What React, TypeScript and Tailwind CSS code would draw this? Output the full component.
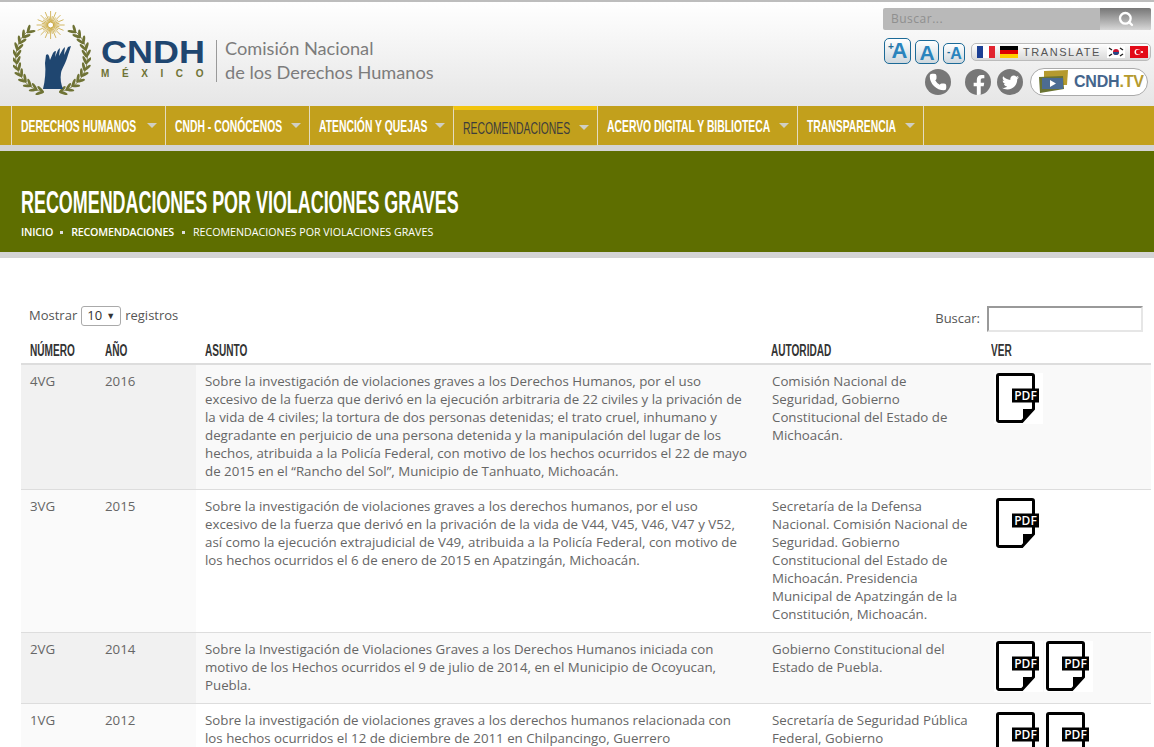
import { Search, Phone } from "lucide-react";
import { FaFacebookF, FaTwitter } from "react-icons/fa";

const body = { fontFamily: '"Open Sans", sans-serif' };
const arial = { fontFamily: '"Liberation Sans", sans-serif' };

const menu = [
  { label: "DERECHOS HUMANOS", w: "w-[154px]" },
  { label: "CNDH - CONÓCENOS", w: "w-[144px]" },
  { label: "ATENCIÓN Y QUEJAS", w: "w-[144px]" },
  { label: "RECOMENDACIONES", w: "w-[144px]", active: true },
  { label: "ACERVO DIGITAL Y BIBLIOTECA", w: "w-[200px]" },
  { label: "TRANSPARENCIA", w: "w-[127px]" },
];

const rows = [
  {
    num: "4VG",
    year: "2016",
    h: "h-[125px]",
    asunto:
      "Sobre la investigación de violaciones graves a los Derechos Humanos, por el uso\nexcesivo de la fuerza que derivó en la ejecución arbitraria de 22 civiles y la privación de\nla vida de 4 civiles; la tortura de dos personas detenidas; el trato cruel, inhumano y\ndegradante en perjuicio de una persona detenida y la manipulación del lugar de los\nhechos, atribuida a la Policía Federal, con motivo de los hechos ocurridos el 22 de mayo\nde 2015 en el “Rancho del Sol”, Municipio de Tanhuato, Michoacán.",
    autoridad: "Comisión Nacional de\nSeguridad, Gobierno\nConstitucional del Estado de\nMichoacán.",
    pdfs: 1,
    odd: true,
  },
  {
    num: "3VG",
    year: "2015",
    h: "h-[143px]",
    asunto:
      "Sobre la investigación de violaciones graves a los derechos humanos, por el uso\nexcesivo de la fuerza que derivó en la privación de la vida de V44, V45, V46, V47 y V52,\nasí como la ejecución extrajudicial de V49, atribuida a la Policía Federal, con motivo de\nlos hechos ocurridos el 6 de enero de 2015 en Apatzingán, Michoacán.",
    autoridad:
      "Secretaría de la Defensa\nNacional. Comisión Nacional de\nSeguridad. Gobierno\nConstitucional del Estado de\nMichoacán. Presidencia\nMunicipal de Apatzingán de la\nConstitución, Michoacán.",
    pdfs: 1,
    odd: false,
  },
  {
    num: "2VG",
    year: "2014",
    h: "h-[71px]",
    asunto:
      "Sobre la Investigación de Violaciones Graves a los Derechos Humanos iniciada con\nmotivo de los Hechos ocurridos el 9 de julio de 2014, en el Municipio de Ocoyucan,\nPuebla.",
    autoridad: "Gobierno Constitucional del\nEstado de Puebla.",
    pdfs: 2,
    odd: true,
  },
  {
    num: "1VG",
    year: "2012",
    h: "h-[143px]",
    asunto:
      "Sobre la investigación de violaciones graves a los derechos humanos relacionada con\nlos hechos ocurridos el 12 de diciembre de 2011 en Chilpancingo, Guerrero",
    autoridad: "Secretaría de Seguridad Pública\nFederal, Gobierno",
    pdfs: 2,
    odd: false,
  },
];

function PdfIcon() {
  return (
    <svg width="49" height="51" viewBox="0 0 49 51" className="block bg-white">
      <path d="M5 1.500h33a1.500 1.500 0 0 1 1.500 1.500v33L28 48.500H5A1.500 1.500 0 0 1 3.500 47V3A1.500 1.500 0 0 1 5 1.500Z" fill="#fff" stroke="#000" strokeWidth="3" />
      <path d="M29 47V36h10Z" fill="#000" />
      <rect x="18" y="15.500" width="27" height="14" fill="#000" />
      <text x="31.500" y="27" textAnchor="middle" fill="#fff" fontSize="12" fontWeight="600" fontFamily="Open Sans, sans-serif">PDF</text>
    </svg>
  );
}

function Logo() {
  const cx = 38.5;
  const cy = 47;
  const r = 35;
  const steps = [0, 1, 2, 3, 4, 5, 6, 7, 8, 9, 10, 11];
  const wreath = (
    <g fill="#6f7335">
      <path d="M15 20A35 35 0 0 0 30 81" fill="none" stroke="#6f7335" strokeWidth="0.8" />
      {steps.map((i) => {
        const deg = 256 - i * 11.2;
        const a = (deg * Math.PI) / 180;
        const x = cx + Math.cos(a) * r;
        const y = cy - Math.sin(a) * r;
        const tangent = 90 - deg;
        return (
          <g key={i}>
            <ellipse cx={x} cy={y} rx="4.4" ry="1.4" transform={`rotate(${tangent + 32} ${x} ${y}) translate(3.500 0)`} />
            <ellipse cx={x} cy={y} rx="4.4" ry="1.4" transform={`rotate(${tangent - 32} ${x} ${y}) translate(3.500 0)`} />
          </g>
        );
      })}
    </g>
  );
  return (
    <svg width="78" height="84" viewBox="0 0 78 84" className="block">
      <g stroke="#c9a73c" strokeWidth="0.8">
        {Array.from({ length: 32 }).map((_, i) => {
          const a = (i * Math.PI) / 16;
          const len = i % 2 ? 9 : 14;
          return <line key={i} x1={37.6} y1={14} x2={37.6 + Math.cos(a) * len} y2={14 + Math.sin(a) * len} />;
        })}
      </g>
      <circle cx="37.6" cy="14" r="3" fill="#fff" stroke="#c9a73c" />
      {wreath}
      <g transform="translate(77 0) scale(-1 1)">{wreath}</g>
      <path d="M30 78C32 70 33 60 32 52L33 44Q35 42 36 45L37 49L40 42Q41 40 43 40L42 46L45 39L47 37L46 45L50 38L52 36L51 44L55 36L58 35L55 44C53 52 49 57 48 62C47 68 48 73 50 78Z" fill="#1f4670" />
    </svg>
  );
}

function Korea() {
  return (
    <svg width="18" height="12" viewBox="0 0 18 12" className="block bg-white">
      <circle cx="9" cy="6" r="3" fill="#c8102e" />
      <path d="M6 6a3 3 0 0 0 6 0Z" fill="#1f4a8a" />
      <path d="M2 2l3 2M13 2l3 2M2 10l3-2M13 10l3-2" stroke="#222" strokeWidth="1.4" />
    </svg>
  );
}

function Turkey() {
  return (
    <svg width="18" height="12" viewBox="0 0 18 12" className="block">
      <rect width="18" height="12" fill="#e30a17" />
      <circle cx="7.500" cy="6" r="3" fill="#fff" />
      <circle cx="8.300" cy="6" r="2.400" fill="#e30a17" />
      <circle cx="12" cy="6" r="1.100" fill="#fff" />
    </svg>
  );
}

function SizeBtn({ sign, cls, text }: { sign: string; cls: string; text: string }) {
  return (
    <div className={`${cls} relative flex items-center justify-center rounded-[5px] border border-[#1c6a97] bg-gradient-to-b from-white to-[#cfd8de] leading-none text-[#2a84bd]`} style={arial}>
      <span className="absolute left-[3px] top-[3px] text-[10px] font-bold text-[#1c6a97]">{sign}</span>
      <span className={text}>A</span>
    </div>
  );
}

export default function App() {
  return (
    <div className="min-h-screen overflow-hidden bg-white text-[#666]" style={body}>
      <header className="flex h-[106px] justify-between border-t-2 border-[#bdbdbd] bg-gradient-to-b from-white to-[#e6e6e6]">
        <div className="ml-[13px] mt-[9px] flex">
          <Logo />
          <div className="ml-[10px] mt-[27px] w-[111px] text-[#1f4670]" style={arial}>
            <div className="origin-left scale-x-[1.16] whitespace-nowrap text-[31px] font-bold leading-[30px]">CNDH</div>
            <div className="text-[10px] font-bold leading-[12px] tracking-[12.6px] text-[#6f7335]">MÉXICO</div>
          </div>
          <div className="ml-[4px] mt-[29px] h-[42px] w-px bg-[#999]" />
          <div className="ml-[8px] mt-[25px] text-[18.2px] leading-[24px] text-[#7c7c7c]" style={{ fontFamily: "Lato, sans-serif" }}>
            Comisión Nacional
            <br />
            de los Derechos Humanos
          </div>
        </div>
        <div className="mr-[3px] mt-[6px] flex w-[268px] flex-col">
          <div className="flex h-[22px] rounded-[2px] bg-[#b9b9b9]">
            <div className="flex-1 pl-[8px] text-[12px] leading-[22px] tracking-[0.5px] text-[#8f8f8f]">Buscar...</div>
            <div className="flex w-[51px] items-center justify-center rounded-r-[2px] bg-gradient-to-b from-[#777] to-[#d8d8d8]">
              <Search size={16} strokeWidth={3.5} color="#fff" />
            </div>
          </div>
          <div className="mt-[8px] flex h-[26px] items-end">
            <SizeBtn sign="+" cls="ml-[1px] h-[26px] w-[27px]" text="text-[22px] font-bold translate-x-[2px]" />
            <SizeBtn sign="" cls="ml-[4px] h-[24px] w-[24px]" text="text-[21px] font-bold" />
            <SizeBtn sign="-" cls="ml-[4px] h-[21px] w-[22px]" text="text-[16px] font-bold translate-x-[2px]" />
            <div className="mb-[3px] ml-[6px] flex h-[18px] w-[180px] items-center rounded-[5px] border border-[#bbb] bg-gradient-to-b from-white to-[#d9d9d9] pl-[5px]">
              <div className="flex h-[12px] w-[18px]">
                <div className="flex-1 bg-[#1c3f94]" />
                <div className="flex-1 bg-white" />
                <div className="flex-1 bg-[#e1232e]" />
              </div>
              <div className="ml-[5px] flex h-[12px] w-[18px] flex-col">
                <div className="flex-1 bg-black" />
                <div className="flex-1 bg-[#d00]" />
                <div className="flex-1 bg-[#fc0]" />
              </div>
              <span className="ml-[5px] text-[11px] tracking-[1.55px] text-[#555]" style={arial}>TRANSLATE</span>
              <div className="ml-[6px]"><Korea /></div>
              <div className="ml-[5px]"><Turkey /></div>
            </div>
          </div>
          <div className="mt-[4px] flex h-[28px] items-center">
            <div className="ml-[42px] flex h-[26px] w-[26px] items-center justify-center rounded-full bg-[#777]">
              <Phone size={18} fill="#fff" color="#fff" />
            </div>
            <div className="ml-[14px] flex h-[26px] w-[26px] items-end justify-center overflow-hidden rounded-full bg-[#777]">
              <FaFacebookF size={20} color="#fff" className="translate-x-[1px]" />
            </div>
            <div className="ml-[6px] flex h-[26px] w-[26px] items-center justify-center rounded-full bg-[#777]">
              <FaTwitter size={17} color="#fff" />
            </div>
            <div className="ml-[7px] flex h-[28px] w-[118px] items-center rounded-full border border-[#aaa] bg-white pl-[8px]">
              <svg width="30" height="24" viewBox="0 0 30 24" className="block shrink-0">
                <path d="M5 1l24-1-1 15H5Z" fill="#b59a2e" />
                <path d="M0 7l24-1 1 13-24 4Z" fill="#6a7332" />
                <path d="M3 8h21v11H3Z" fill="#4c6c92" />
                <path d="M11 10l6 3.500-6 3.500Z" fill="#fff" />
              </svg>
              <span className="ml-[5px] whitespace-nowrap text-[16px] font-bold tracking-[-0.2px]" style={arial}>
                <span className="text-[#44658c]">CNDH</span>
                <span className="text-[#b59a2e]">.TV</span>
              </span>
            </div>
          </div>
        </div>
      </header>

      <nav className="flex h-[39px] bg-[#c2a01c] pl-[11px]" style={arial}>
        {menu.map((m) => (
          <div
            key={m.label}
            className={`${m.w} flex items-center border-l border-[#e4dcc0] pl-[9px] pr-[8px] text-[17px] last:border-r ${m.active ? "h-[40px] border-t-[4px] border-b border-t-[#f1c40f] border-b-[#d9d3b0] font-normal text-[#3d3d3d]" : "h-[39px] font-bold text-white"}`}
          >
            <div className="w-0 flex-1">
              <div className="w-max origin-left translate-y-[1px] scale-x-[0.61] whitespace-nowrap">{m.label}</div>
            </div>
            <span className="h-0 w-0 border-x-[5px] border-t-[5px] border-x-transparent border-t-[#cfcfc4]" />
          </div>
        ))}
      </nav>

      <section className="h-[113px] border-y-[6px] border-[#d4d4d4] bg-[#5e6e00] pl-[21px] pt-[34px] text-white">
        <h1 className="w-max origin-left scale-x-[0.578] whitespace-nowrap text-[31px] font-bold leading-[36px]" style={arial}>RECOMENDACIONES POR VIOLACIONES GRAVES</h1>
        <div className="mt-[4px] flex items-center text-[10.7px] leading-[14px]">
          <span className="font-semibold tracking-[-0.2px]">INICIO</span>
          <span className="ml-[7px] mr-[8px] h-[3px] w-[3px] bg-[#ddd]" />
          <span className="font-semibold tracking-[-0.2px]">RECOMENDACIONES</span>
          <span className="ml-[8px] mr-[8px] h-[3px] w-[3px] bg-[#ddd]" />
          <span>RECOMENDACIONES POR VIOLACIONES GRAVES</span>
        </div>
      </section>

      <main className="pl-[21px] pr-[3px] pt-[48px]">
        <div className="flex h-[34px] justify-between pl-[8px] text-[13px] text-[#555]">
          <div className="flex h-[20px] items-center">
            Mostrar
            <span className="mx-[4px] flex h-[20px] w-[40px] items-center justify-between rounded-[3px] border border-[#aaa] px-[5px] text-[#333]">
              10 <span className="text-[9px]">▼</span>
            </span>
            registros
          </div>
          <div className="mr-[8px] flex items-start">
            <span className="mt-[3px]">Buscar:</span>
            <div className="ml-[7px] h-[26px] w-[156px] border-2 border-[#e6e6e6] border-l-[#999] border-t-[#999]" />
          </div>
        </div>
        <div className="flex h-[25px] items-start border-b-2 border-[#ddd] pt-[2px] text-[16px] font-bold leading-[18px] text-[#333]" style={arial}>
          <div className="w-[75px] pl-[9px]"><div className="w-max origin-left scale-x-[0.63]">NÚMERO</div></div>
          <div className="w-[100px] pl-[9px]"><div className="w-max origin-left scale-x-[0.63]">AÑO</div></div>
          <div className="w-[566px] pl-[9px]"><div className="w-max origin-left scale-x-[0.63]">ASUNTO</div></div>
          <div className="w-[220px] pl-[9px]"><div className="w-max origin-left scale-x-[0.63]">AUTORIDAD</div></div>
          <div className="pl-[9px]"><div className="w-max origin-left scale-x-[0.63]">VER</div></div>
        </div>
        {rows.map((r) => (
          <div key={r.num} className={`flex ${r.h} border-b border-[#ddd] text-[13.3px] leading-[18px] ${r.odd ? "bg-[#f9f9f9]" : "bg-white"}`}>
            <div className={`w-[75px] pl-[9px] pt-[7px] ${r.odd ? "bg-[#f1f1f1]" : "bg-[#fafafa]"}`}>{r.num}</div>
            <div className={`w-[100px] pl-[9px] pt-[7px] ${r.odd ? "bg-[#f1f1f1]" : "bg-[#fafafa]"}`}>{r.year}</div>
            <div className="w-[566px] whitespace-pre-line pl-[9px] pt-[7px]">{r.asunto}</div>
            <div className="w-[220px] whitespace-pre-line pl-[10px] pt-[7px]">{r.autoridad}</div>
            <div className="flex gap-[1px] pl-[12px] pt-[8px]">
              {Array.from({ length: r.pdfs }).map((_, i) => (
                <PdfIcon key={i} />
              ))}
            </div>
          </div>
        ))}
      </main>
    </div>
  );
}
